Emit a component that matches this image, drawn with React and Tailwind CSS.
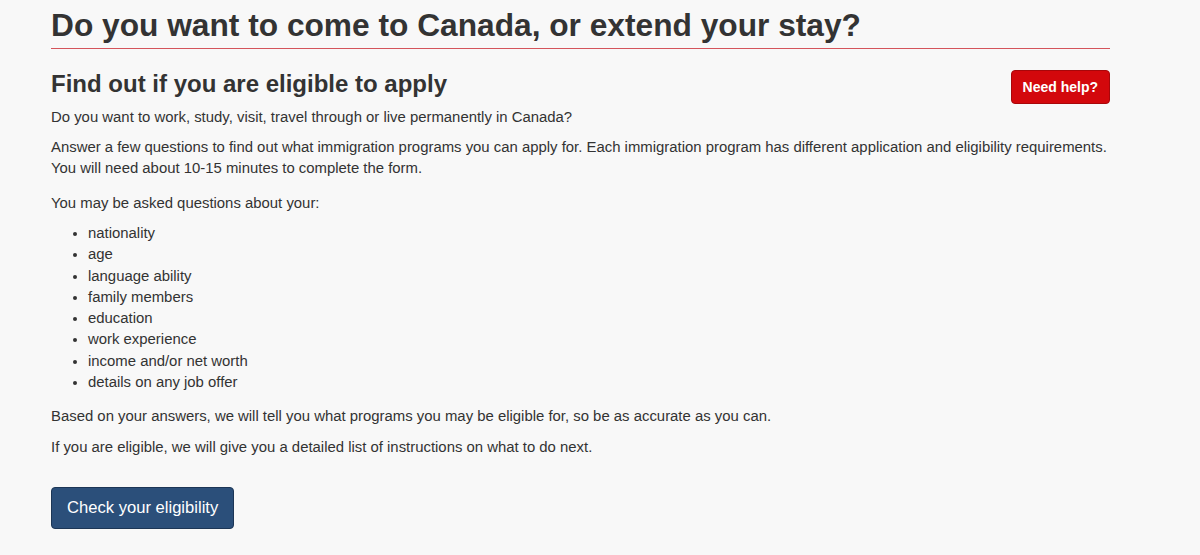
export default function App() {
  const topics = [
    'nationality',
    'age',
    'language ability',
    'family members',
    'education',
    'work experience',
    'income and/or net worth',
    'details on any job offer',
  ];

  return (
    <div className="min-h-[555px] bg-[#f8f8f8] text-[#333] font-['Liberation_Sans',Arial,sans-serif]">
      <div className="w-[1059px] ml-[51px] pt-[5px]">
        {/* Page title */}
        <h1 className="text-[31.7px] leading-[40px] font-bold pb-[3px] border-b border-[#d4545b]">
          Do you want to come to Canada, or extend your stay?
        </h1>

        <div className="flex items-start justify-between mt-[20px]">
          <h2 className="text-[24px] leading-[30px] font-bold">Find out if you are eligible to apply</h2>
          <button className="mt-[1px] h-[34px] px-[11px] rounded-[4px] bg-[#d3080c] border border-[#a8070a] text-white text-[14px] font-bold">
            Need help?
          </button>
        </div>

        <div className="text-[14.9px] leading-[21px]">
          <p className="mt-[3px]">Do you want to work, study, visit, travel through or live permanently in Canada?</p>
          <p className="mt-[9px]">
            Answer a few questions to find out what immigration programs you can apply for. Each immigration program has different application and eligibility requirements. You will need about 10-15 minutes to complete the form.
          </p>
          <p className="mt-[14px]">You may be asked questions about your:</p>
          <ul className="mt-[9px] list-disc pl-[37px]">
            {topics.map(t => (
              <li key={t} className="leading-[21.3px]">{t}</li>
            ))}
          </ul>
          <p className="mt-[13px]">Based on your answers, we will tell you what programs you may be eligible for, so be as accurate as you can.</p>
          <p className="mt-[10px]">If you are eligible, we will give you a detailed list of instructions on what to do next.</p>
        </div>

        <button className="mt-[29px] h-[42px] px-[15px] rounded-[4px] bg-[#2b4f7a] border border-[#1c3656] text-white text-[16.6px]">
          Check your eligibility
        </button>
      </div>
    </div>
  );
}
